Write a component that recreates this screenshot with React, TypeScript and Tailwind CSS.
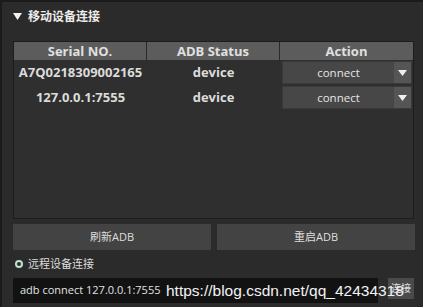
import React from "react";

const font = { fontFamily: '"Open Sans", "Noto Sans CJK SC", sans-serif' };

function Arrow() {
  return (
    <svg width="9" height="6" viewBox="0 0 9 6">
      <path d="M0 0 L9 0 L4.5 6 Z" fill="#f0f0f0" />
    </svg>
  );
}

function Dropdown() {
  return (
    <div className="flex h-[23px] w-[130px] border border-[#3a3a3a] bg-[#474747]">
      <div className="flex flex-1 items-center justify-center text-[11.5px] font-normal text-[#e6e6e6]">connect</div>
      <div className="flex w-[17px] items-center justify-center bg-[#555555]">
        <Arrow />
      </div>
    </div>
  );
}

export default function App() {
  const rows = [
    { serial: "A7Q0218309002165", status: "device" },
    { serial: "127.0.0.1:7555", status: "device" },
  ];
  return (
    <div
      className="flex h-[307px] w-[423px] flex-col overflow-hidden border-l-[2px] border-t-[2px] border-[#1b1b1b] bg-[#2b2b2b]"
      style={font}
    >
      <div className="flex h-[28px] items-center gap-[6px] pl-[11px] pt-[1px]">
        <svg width="9" height="7" viewBox="0 0 9 7">
          <path d="M0 0 L9 0 L4.5 7 Z" fill="#f2f2f2" />
        </svg>
        <span className="text-[12px] font-bold text-[#ececec]">移动设备连接</span>
      </div>
      <div className="ml-[11px] mt-[11px] flex h-[178px] w-[401px] flex-col border border-[#1c1c1c] bg-[#2f2f2f]">
        <div className="grid h-[18px] grid-cols-3 bg-[#5c5c5c] text-[13px] font-bold text-[#e0e0e0]">
          <div className="flex items-center justify-center border-r border-[#2a2a2a]">Serial NO.</div>
          <div className="flex items-center justify-center border-r border-[#2a2a2a]">ADB Status</div>
          <div className="flex items-center justify-center">Action</div>
        </div>
        {rows.map((r, i) => (
          <div key={i} className="grid h-[25px] grid-cols-3 items-center text-[13px] font-bold text-[#dcdcdc]">
            <div className="text-center">{r.serial}</div>
            <div className="text-center">{r.status}</div>
            <div className="flex justify-end pr-[1px]">
              <Dropdown />
            </div>
          </div>
        ))}
      </div>
      <div className="ml-[11px] mt-[5px] flex w-[402px] gap-[6px]">
        <div className="flex h-[26px] flex-1 items-center justify-center bg-[#434343] text-[11px] text-[#dedede]">
          刷新ADB
        </div>
        <div className="flex h-[26px] flex-1 items-center justify-center bg-[#434343] text-[11px] text-[#dedede]">
          重启ADB
        </div>
      </div>
      <div className="ml-[13px] mt-[8px] flex h-[12px] items-center gap-[5px]">
        <div className="h-[8px] w-[8px] rounded-full border-[2px] border-[#bfe3c9]" />
        <span className="text-[11px] text-[#dcdcdc]">远程设备连接</span>
      </div>
      <div className="relative ml-[11px] mt-[8px] flex items-start">
        <div className="flex h-[25px] w-[365px] items-center bg-[#121212] pl-[7px] text-[11px] text-[#e2e2e2]">
          adb connect 127.0.0.1:7555
        </div>
        <div className="ml-[10px] flex h-[21px] w-[26px] items-center justify-center bg-[#4a4a4a] text-[10px] text-[#e0e0e0]">
          连接
        </div>
        <span
          className="absolute left-[153px] top-[1px] whitespace-nowrap text-[15.5px] text-[#f2f2f2]"
          style={{ fontFamily: '"Liberation Sans", Arial, sans-serif' }}
        >
          https://blog.csdn.net/qq_42434318
        </span>
      </div>
    </div>
  );
}
